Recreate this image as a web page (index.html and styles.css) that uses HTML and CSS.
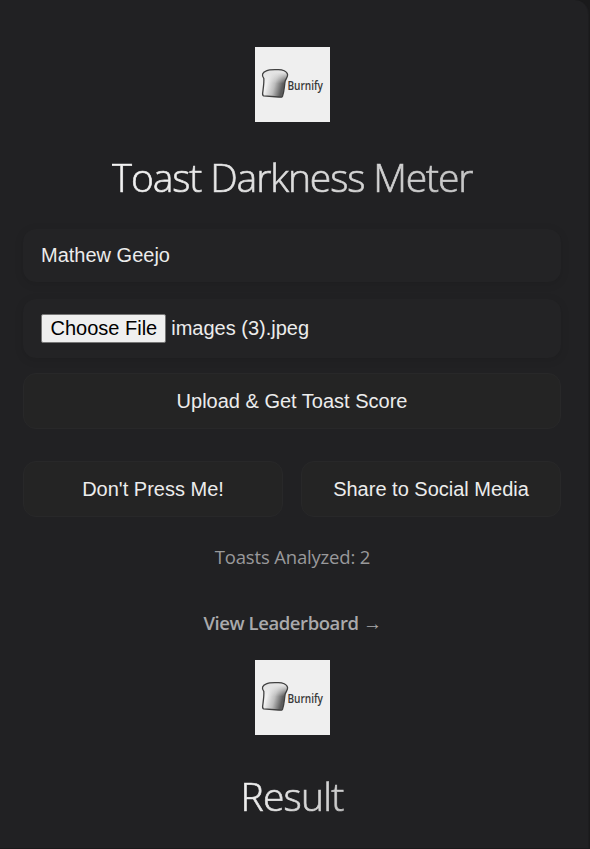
FILE: index.html
```html
<!DOCTYPE html>
<html lang="en">
<head>
<meta charset="utf-8">
<title>Toast Darkness Meter</title>
<link rel="stylesheet" href="styles.css">
</head>
<body>
<svg width="0" height="0" class="defs">
  <defs>
    <linearGradient id="crumb" x1="0" y1="0.35" x2="1" y2="0.65">
      <stop offset="0.2" stop-color="#f0f0f0"/>
      <stop offset="0.5" stop-color="#bcbcbc"/>
      <stop offset="0.8" stop-color="#5c5c5c"/>
    </linearGradient>
    <linearGradient id="shine" x1="0" y1="0" x2="0" y2="1">
      <stop offset="0.1" stop-color="#e4e4e4"/>
      <stop offset="0.5" stop-color="#e0e0e0" stop-opacity="0"/>
    </linearGradient>
    <symbol id="logo" viewBox="0 0 75 75">
      <rect width="75" height="75" fill="#efefef"/>
      <g transform="translate(-0.7 0.3)">
        <path d="M9.5 31C7 28 8 25 12 23.5C15 22 19 22.2 23 22.3C28 22 33 24 33.3 27.5C33.4 30 31.5 31.5 30.8 34C30 39 30 44 28.2 49C27.5 50.2 26 50 24 49.7L9.3 48.5C8 48 8.1 46.5 8.5 44.5C9.1 40 9.9 35 9.5 31Z" fill="url(#crumb)"/>
        <path d="M9.5 31C7 28 8 25 12 23.5C15 22 19 22.2 23 22.3C28 22 33 24 33.3 27.5C33.4 30 31.5 31.5 30.8 34C30 39 30 44 28.2 49C27.5 50.2 26 50 24 49.7L9.3 48.5C8 48 8.1 46.5 8.5 44.5C9.1 40 9.9 35 9.5 31Z" fill="url(#shine)" stroke="#404040" stroke-width="1.3"/>
      </g>
      <text x="32.4" y="43" textLength="35.6" lengthAdjust="spacingAndGlyphs" class="logo-text">Burnify</text>
    </symbol>
  </defs>
</svg>
<main class="panel">
  <svg class="logo"><use href="#logo"/></svg>
  <h1 class="title"><span>Toast Darkness Meter</span></h1>
  <form class="form">
    <input class="field name" type="text" value="Mathew Geejo">
    <div class="field file"><span class="choose">Choose File</span><span>images (3).jpeg</span></div>
    <button class="btn" type="button">Upload &amp; Get Toast Score</button>
    <div class="row">
      <button class="btn" type="button">Don't Press Me!</button>
      <button class="btn" type="button">Share to Social Media</button>
    </div>
  </form>
  <p class="count">Toasts Analyzed: 2</p>
  <a class="link">View Leaderboard <span class="arrow">→</span></a>
  <svg class="logo"><use href="#logo"/></svg>
  <h2 class="title result"><span>Result</span></h2>
</main>
</body>
</html>
```
FILE: styles.css
```css
* { box-sizing: border-box; }
body {
  margin: 0;
  height: 849px;
  overflow: hidden;
  background: #1a1a1b;
  font-family: "Open Sans", "Noto Sans", sans-serif;
}
.defs { position: absolute; }
.panel {
  width: 589px;
  height: 848px;
  padding: 47px 26px 0 23px;
  background: #212123;
  border-right: 1px solid #1d1d1f;
  border-top-right-radius: 14px;
  display: flex;
  flex-direction: column;
  align-items: center;
}
.logo { width: 75px; height: 75px; flex: none; display: block; }
.logo-text { font: 600 12.5px "Open Sans", sans-serif; fill: #383838; }
.title {
  margin: 27px 0 0;
  height: 56px;
  line-height: 56px;
  font-size: 39px;
  font-weight: 300;
  white-space: nowrap;
}
.title span {
  display: inline-block;
  letter-spacing: -1.12px;
  padding-right: 1px;
  color: transparent;
  -webkit-text-stroke: 0.7px transparent;
  background: linear-gradient(120deg, #f6f6f6, #c4c4c4);
  -webkit-background-clip: text;
  background-clip: text;
}
.form { width: 538px; margin-top: 24px; align-self: flex-start; }
.field, .btn {
  display: block;
  width: 100%;
  border-radius: 13px;
  font: 20px "Liberation Sans", Arial, sans-serif;
  color: #ececec;
}
.field {
  padding: 0 18px;
  border: 0;
  background: #232325;
  box-shadow: 0 2px 10px rgba(0, 0, 0, 0.1);
}
.name { height: 53px; }
.file {
  height: 59px;
  margin-top: 17px;
  display: flex;
  align-items: center;
  gap: 5px;
}
.choose {
  height: 29px;
  line-height: 26px;
  padding: 0 8px 0 8.5px;
  border: 1px solid #767676;
  border-radius: 2px;
  background: #efefef;
  color: #000;
}
.btn {
  height: 56px;
  margin-top: 15px;
  padding: 0;
  border: 1px solid #282829;
  background: #242424;
}
.row { display: flex; gap: 18px; margin-top: 32px; }
.row .btn { flex: 1; margin: 0; }
.count {
  margin: 26px 0 0;
  line-height: 28px;
  font-size: 18.5px;
  letter-spacing: -0.17px;
  color: #99999b;
}
.link {
  margin-top: 38px;
  height: 28px;
  line-height: 28px;
  font-size: 18.5px;
  font-weight: 600;
  letter-spacing: -0.42px;
  color: #aaaaac;
}
.arrow {
  font-family: "Liberation Sans", sans-serif;
  font-size: 19px;
  font-weight: 400;
}
.link + .logo { margin-top: 23px; }
.result { margin-top: 33px; }
.result span { letter-spacing: -0.8px; }
```
